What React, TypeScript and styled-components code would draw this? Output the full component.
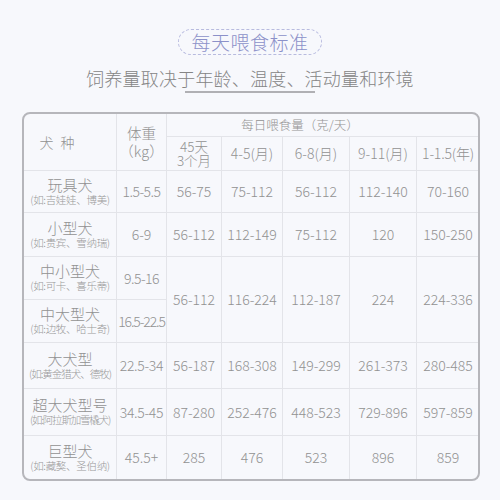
import React from 'react';
import styled, { createGlobalStyle } from 'styled-components';

const GlobalStyle = createGlobalStyle`
  html, body {
    margin: 0;
    padding: 0;
    background: #f7f8fc;
  }
  * {
    box-sizing: border-box;
  }
`;

const Page = styled.div`
  width: 500px;
  height: 500px;
  display: flex;
  flex-direction: column;
  align-items: center;
  font-family: 'Noto Sans CJK SC', 'Noto Sans', sans-serif;
  font-weight: 300;
  color: #969696;
  background: #f7f8fc;
  overflow: hidden;
`;

const Pill = styled.div`
  margin-top: 29px;
  height: 26px;
  padding: 0 12px;
  border: 1px dashed #b8bbdf;
  border-radius: 13px;
  font-size: 19px;
  line-height: 24px;
  color: #8c91c9;
  letter-spacing: 0.5px;
`;

const Subtitle = styled.div`
  margin-top: 11px;
  font-size: 18px;
  line-height: 24px;
  color: #858585;
  letter-spacing: 0.2px;
`;

const Underline = styled.div`
  width: 130px;
  height: 1.5px;
  margin-top: 1px;
  background: #b0b0b4;
`;

const TableFrame = styled.div`
  align-self: flex-start;
  flex-shrink: 0;
  margin: 19px 0 0 22px;
  width: 458px;
  border: 2px solid #b6b6bb;
  border-radius: 8px;
  overflow: hidden;
`;

const Table = styled.table`
  width: 456px;
  margin: -1px;
  border-collapse: collapse;
  table-layout: fixed;
`;

const Row = styled.tr<{ $h: number }>`
  height: ${(p) => p.$h}px;
`;

const Cell = styled.td<{ $tight?: number; $size?: number }>`
  padding: 0;
  border: 1px solid #e3e4e9;
  text-align: center;
  vertical-align: middle;
  font-size: ${(p) => p.$size ?? 14}px;
  font-weight: 300;
  line-height: 16px;
  letter-spacing: ${(p) => p.$tight ?? 0}px;
  color: #929292;
  white-space: nowrap;
`;

const HeadCell = styled(Cell).attrs({ as: 'th' })``;

const BreedHead = styled(HeadCell)`
  padding-right: 24px;
  letter-spacing: 2px;
`;

const GroupHead = styled(HeadCell)`
  font-size: 12.5px;
  line-height: 16px;
  padding-right: 46px;
`;

const TwoLine = styled.div<{ $lh?: number }>`
  line-height: ${(p) => p.$lh ?? 16}px;
`;

const DogName = styled.div`
  font-size: 15px;
  line-height: 17px;
  color: #929292;
`;

const DogNote = styled.div<{ $tight?: number }>`
  font-size: 10.5px;
  line-height: 14px;
  letter-spacing: ${(p) => p.$tight ?? -0.3}px;
  color: #999999;
`;

type Breed = {
  name: string;
  note: string;
  noteTight?: number;
  weight: string;
  weightTight?: number;
  values?: string[];
  h: number;
  span?: boolean;
};

const breeds: Breed[] = [
  { name: '玩具犬', note: '(如:吉娃娃、博美)', weight: '1.5-5.5', weightTight: -0.5, values: ['56-75', '75-112', '56-112', '112-140', '70-160'], h: 42 },
  { name: '小型犬', note: '(如:贵宾、雪纳瑞)', weight: '6-9', values: ['56-112', '112-149', '75-112', '120', '150-250'], h: 44 },
  { name: '中小型犬', note: '(如:可卡、喜乐蒂)', weight: '9.5-16', weightTight: -0.5, values: ['56-112', '116-224', '112-187', '224', '224-336'], h: 43, span: true },
  { name: '中大型犬', note: '(如:边牧、哈士奇)', weight: '16.5-22.5', weightTight: -1.1, h: 43 },
  { name: '大犬型', note: '(如:黄金猎犬、德牧)', noteTight: -1, weight: '22.5-34', weightTight: -0.3, values: ['56-187', '168-308', '149-299', '261-373', '280-485'], h: 46 },
  { name: '超大犬型号', note: '(如:阿拉斯加雪橇犬)', noteTight: -1.2, weight: '34.5-45', weightTight: -0.3, values: ['87-280', '252-476', '448-523', '729-896', '597-859'], h: 47 },
  { name: '巨型犬', note: '(如:藏獒、圣伯纳)', weight: '45.5+', values: ['285', '476', '523', '896', '859'], h: 44 },
];

const widths = [93, 50, 55, 61, 67, 67, 63];

export default function App() {
  return (
    <Page>
      <GlobalStyle />
      <Pill>每天喂食标准</Pill>
      <Subtitle>饲养量取决于年龄、温度、活动量和环境</Subtitle>
      <Underline />
      <TableFrame>
        <Table>
          <colgroup>
            {widths.map((w, i) => (
              <col key={i} style={{ width: w }} />
            ))}
          </colgroup>
          <thead>
            <Row $h={23}>
              <BreedHead rowSpan={2} $size={14}>
                犬 种
              </BreedHead>
              <HeadCell rowSpan={2} $size={14.5}>
                <TwoLine $lh={18}>
                  体重
                  <br />
                  （kg）
                </TwoLine>
              </HeadCell>
              <GroupHead colSpan={5}>每日喂食量（克/天）</GroupHead>
            </Row>
            <Row $h={34}>
              <HeadCell $size={13.5}>
                <TwoLine $lh={14}>
                  45天
                  <br />
                  3个月
                </TwoLine>
              </HeadCell>
              <HeadCell>4-5(月)</HeadCell>
              <HeadCell>6-8(月)</HeadCell>
              <HeadCell>9-11(月)</HeadCell>
              <HeadCell $tight={-0.2}>1-1.5(年)</HeadCell>
            </Row>
          </thead>
          <tbody>
            {breeds.map((r) => (
              <Row key={r.name} $h={r.h}>
                <Cell>
                  <DogName>{r.name}</DogName>
                  <DogNote $tight={r.noteTight}>{r.note}</DogNote>
                </Cell>
                <Cell $tight={r.weightTight}>{r.weight}</Cell>
                {r.values?.map((v, i) => (
                  <Cell key={i} rowSpan={r.span ? 2 : 1}>
                    {v}
                  </Cell>
                ))}
              </Row>
            ))}
          </tbody>
        </Table>
      </TableFrame>
    </Page>
  );
}
